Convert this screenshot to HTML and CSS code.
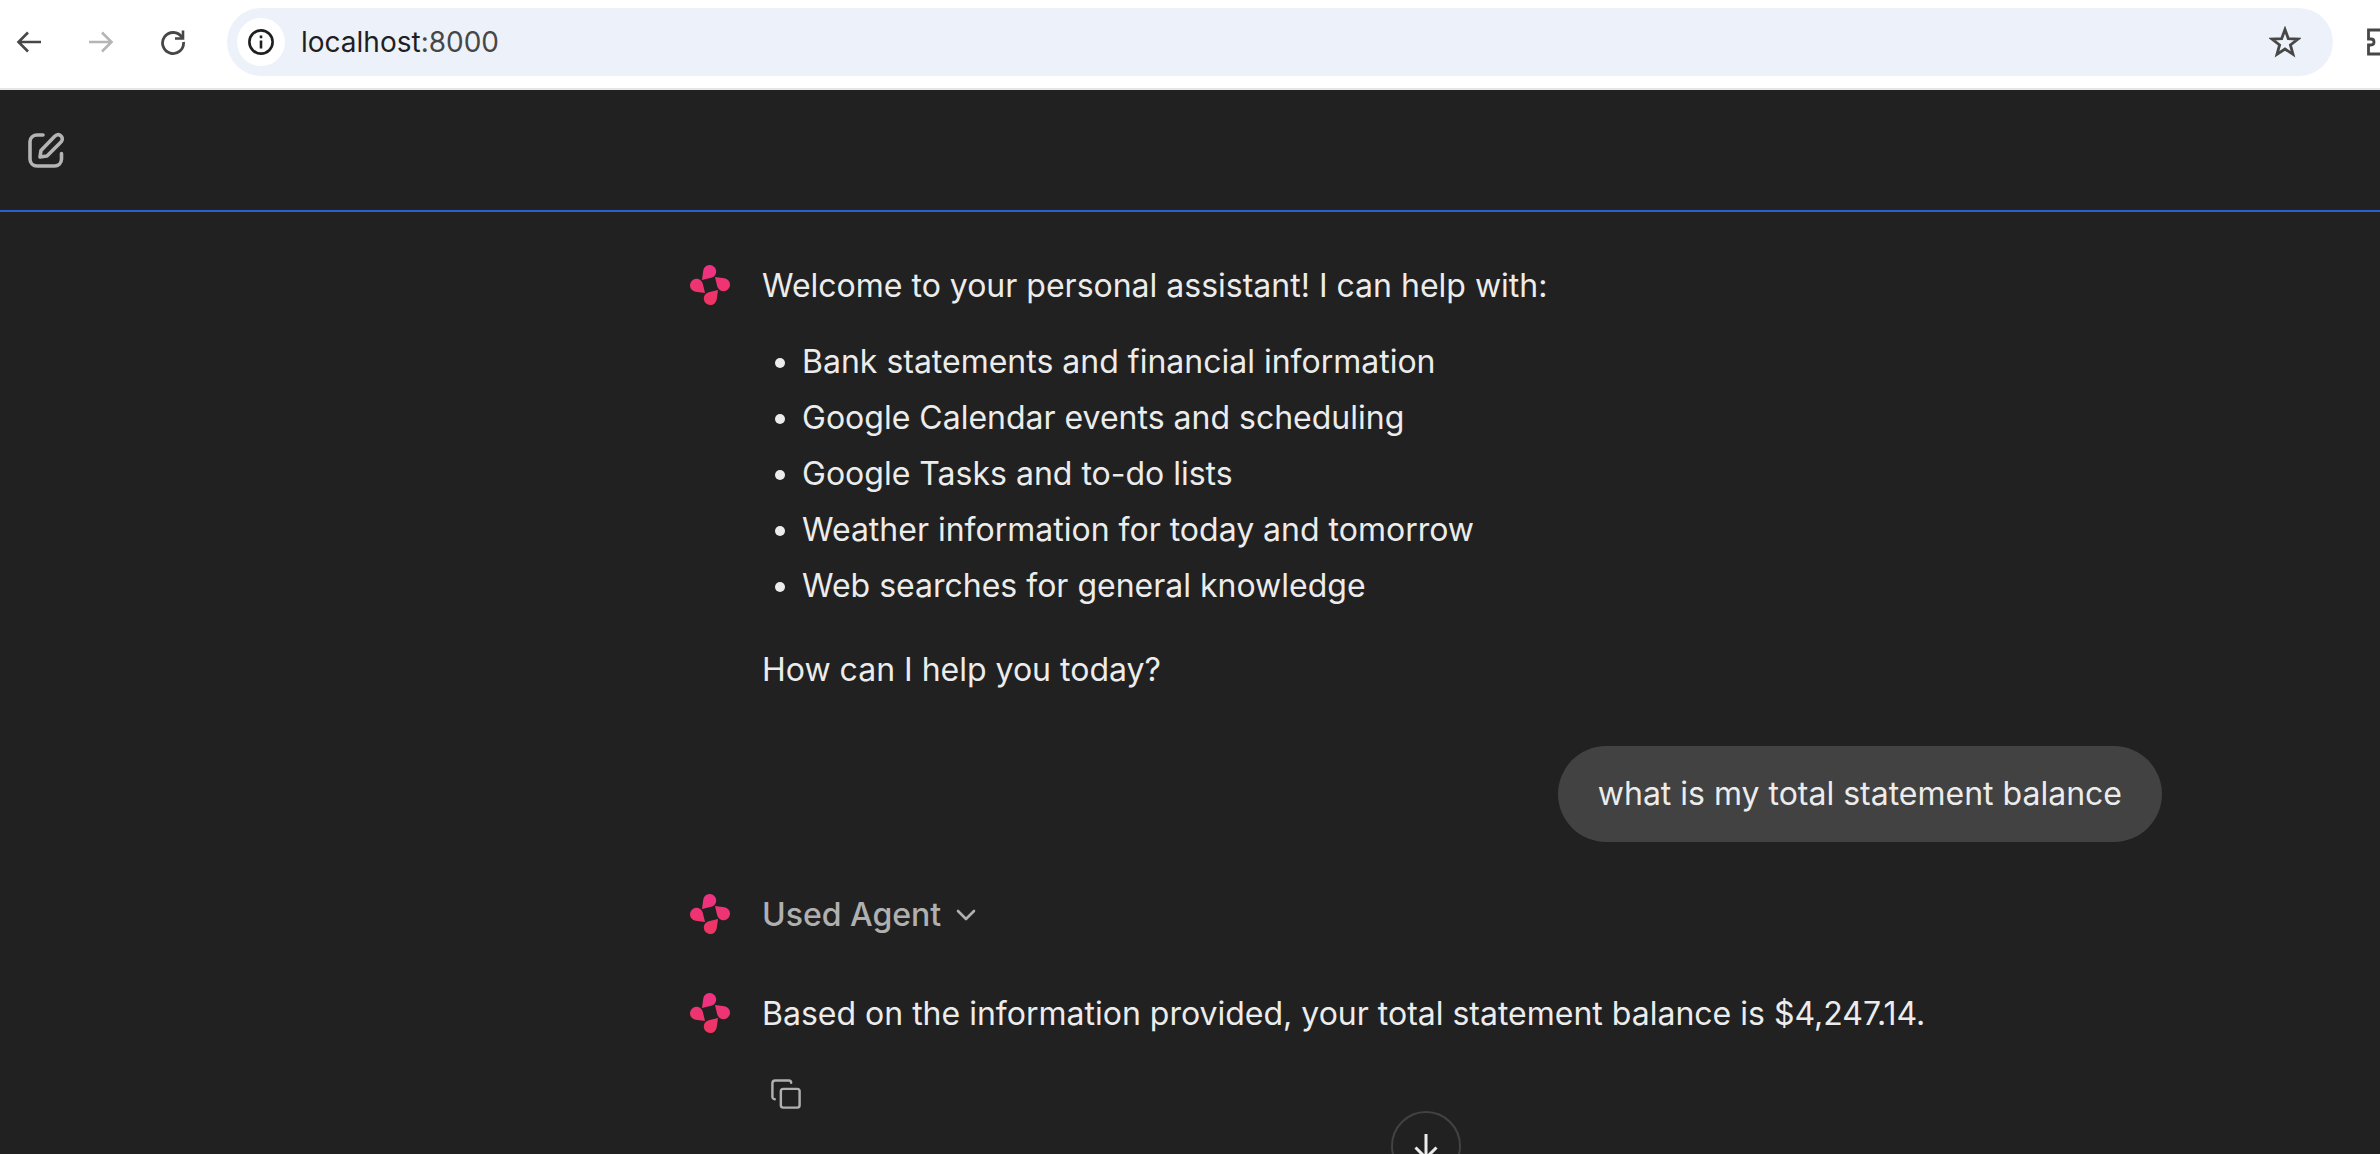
FILE: index.html
```html
<!DOCTYPE html>
<html lang="en">

<head>
    <meta charset="UTF-8">
    <title>localhost:8000</title>
    <link rel="stylesheet" href="styles.css">
</head>

<body>
    <svg class="defs" width="0" height="0">
        <defs>
            <linearGradient id="petal" gradientUnits="userSpaceOnUse" x1="20" y1="0" x2="20" y2="40">
                <stop offset="0" stop-color="#ee3286"></stop>
                <stop offset="1" stop-color="#ee3560"></stop>
            </linearGradient>
            <symbol id="logo" viewBox="0 0 40 40">
                <path fill="url(#petal)" d="M12 15 13.260 5.630A6.500 6.500 0 1 1 21.200 12.820Z"></path>
                <path fill="url(#petal)" d="M25 12 34.370 13.260A6.500 6.500 0 1 1 27.180 21.200Z"></path>
                <path fill="url(#petal)" d="M28 25 26.740 34.370A6.500 6.500 0 1 1 18.800 27.180Z"></path>
                <path fill="url(#petal)" d="M15 28 5.630 26.740A6.500 6.500 0 1 1 12.820 18.800Z"></path>
            </symbol>
        </defs>
    </svg>

    <div class="browser-bar">
        <button class="nav-btn">
            <svg width="28" height="28" viewBox="0 0 28 28" fill="none" stroke="#474747" stroke-width="2.600">
                <path d="M26 14H4M13 4.500 3.500 14l9.500 9.500"></path>
            </svg>
        </button>
        <button class="nav-btn">
            <svg width="28" height="28" viewBox="0 0 28 28" fill="none" stroke="#b5b5b5" stroke-width="2.600">
                <path d="M2 14h22M15 4.500l9.500 9.500-9.500 9.500"></path>
            </svg>
        </button>
        <button class="nav-btn">
            <svg width="28" height="28" viewBox="0 0 28 28" fill="none" stroke="#474747" stroke-width="2.800">
                <path d="M23 9.500A10.500 10.500 0 1 0 24.500 14"></path>
                <path d="M24 2.500V10.500H16" stroke-width="2.600"></path>
            </svg>
        </button>
        <div class="address">
            <span class="site-info">
                <svg width="28" height="28" viewBox="0 0 26 26" fill="none" stroke="#1f1f1f" stroke-width="2.400">
                    <circle cx="13" cy="13" r="10.800"></circle>
                    <path d="M13 11.500V19M13 7V9.500"></path>
                </svg>
            </span>
            <span class="url">localhost<span class="port">:8000</span></span>
            <svg class="star" width="32" height="32" viewBox="0 0 32 32" fill="none" stroke="#474747" stroke-width="2.800">
                <path d="M16 3.500 19.300 12.600 29 13 21.400 19 24 28.300 16 23 8 28.300 10.600 19 3 13 12.700 12.600Z"></path>
            </svg>
        </div>
        <svg class="puzzle" width="32" height="32" viewBox="0 0 32 32" fill="none" stroke="#474747" stroke-width="2.800">
            <path d="M22 4H1.500V13H4C8 13 8 19 4 19H1.500V28H22"></path>
        </svg>
    </div>

    <div class="app">
        <header class="chat-header">
            <button class="new-chat">
                <svg width="36" height="36" viewBox="0 0 36 36" fill="none" stroke="#b4b4b4" stroke-width="3.600" stroke-linecap="round" stroke-linejoin="round">
                    <path d="M15 3H9C5.500 3 2 5.500 2 9.500V27C2 31 5 34 9 34H26.500C30.500 34 33.500 31 33.500 27V21.500"></path>
                    <path d="M12 25 13 18.500 26.500 4.500C28.500 2.500 31 2 33 4C35 6 34.500 8.500 32.500 10.500L19 24Z"></path>
                </svg>
            </button>
        </header>

        <main class="thread">
            <div class="message">
                <svg class="avatar"><use href="#logo"></use></svg>
                <div class="body">
                    <p>Welcome to your personal assistant! I can help with:</p>
                    <ul class="topics">
                        <li>Bank statements and financial information</li>
                        <li>Google Calendar events and scheduling</li>
                        <li>Google Tasks and to-do lists</li>
                        <li>Weather information for today and tomorrow</li>
                        <li>Web searches for general knowledge</li>
                    </ul>
                    <p>How can I help you today?</p>
                </div>
            </div>

            <div class="user-row">
                <div class="bubble">what is my total statement balance</div>
            </div>

            <div class="message agent-row">
                <svg class="avatar"><use href="#logo"></use></svg>
                <div class="agent-toggle">
                    Used Agent
                    <svg width="22" height="14" viewBox="0 0 22 14" fill="none" stroke="#b0b0b0" stroke-width="2.600" stroke-linecap="round" stroke-linejoin="round">
                        <path d="M3 3l8 8 8-8"></path>
                    </svg>
                </div>
            </div>

            <div class="message answer-row">
                <svg class="avatar"><use href="#logo"></use></svg>
                <div class="body">
                    <p>Based on the information provided, your total statement balance is $4,247.14.</p>
                    <button class="copy-btn">
                        <svg width="30" height="30" viewBox="0 0 32 32" fill="none" stroke="#b0b0b0" stroke-width="2.600" stroke-linecap="round" stroke-linejoin="round">
                            <rect x="10.500" y="10.500" width="20" height="20" rx="2.500"></rect>
                            <path d="M4 21.500C2.500 21.500 1.500 20.500 1.500 19V4.500C1.500 2.800 2.800 1.500 4.500 1.500H19C20.500 1.500 21.500 2.500 21.500 4"></path>
                        </svg>
                    </button>
                </div>
            </div>
        </main>

        <button class="scroll-down">
            <svg width="28" height="28" viewBox="0 0 28 28" fill="none" stroke="#ececec" stroke-width="3">
                <path d="M14 2V26M3.500 15.500 14 26 24.500 15.500"></path>
            </svg>
        </button>
    </div>
</body>

</html>
```

FILE: styles.css
```css
html,
body {
    height: 100%;
}

body {
    margin: 0;
    overflow: hidden;
    background-color: #212121;
    font-family: Inter, "Liberation Sans", sans-serif;
    color: #ececec;
}

.defs {
    display: block;
    height: 0;
}

button {
    background: none;
    border: 0;
    padding: 0;
    display: block;
    line-height: 0;
}

/* browser chrome */
.browser-bar {
    height: 84px;
    padding-bottom: 4px;
    background-color: #fff;
    border-bottom: 2px solid #e6e6e6;
    display: flex;
    align-items: center;
    padding-left: 15px;
}

.nav-btn {
    width: 28px;
    margin-right: 44px;
}

.address {
    flex: none;
    width: 2106px;
    height: 68px;
    margin-left: -4px;
    margin-right: 34px;
    box-sizing: border-box;
    background-color: #edf2fa;
    border-radius: 34px;
    display: flex;
    align-items: center;
    padding-left: 10px;
    padding-right: 32px;
}

.site-info {
    width: 48px;
    height: 48px;
    border-radius: 50%;
    background-color: #fff;
    display: flex;
    align-items: center;
    justify-content: center;
}

.url {
    margin-left: 16px;
    font-size: 28px;
    color: #1f1f1f;
    flex: 1;
}

.port {
    color: #474747;
}

.star,
.puzzle {
    flex: none;
}

/* app */
.app {
    height: 1064px;
    position: relative;
}

.chat-header {
    height: 122px;
    box-sizing: border-box;
    border-bottom: 2px solid #2a5fd0;
    padding: 42px 0 0 28px;
}

.thread {
    width: 1472px;
    margin-left: 690px;
    padding-top: 46px;
    font-size: 32px;
    line-height: 56px;
}

.message {
    display: flex;
    gap: 32px;
}

.avatar {
    flex: none;
    width: 40px;
    height: 40px;
    margin-top: 7px;
}

.body p {
    margin: 0;
}

.topics {
    margin: 20px 0 28px;
    padding-left: 40px;
}

.user-row {
    display: flex;
    justify-content: flex-end;
    margin-top: 48px;
}

.bubble {
    background-color: #424242;
    border-radius: 48px;
    padding: 20px 40px;
}

.agent-row {
    margin-top: 45px;
}

.agent-toggle {
    color: #b0b0b0;
    font-weight: 500;
    display: flex;
    align-items: center;
    gap: 14px;
}

.answer-row {
    margin-top: 43px;
}

.copy-btn {
    margin: 37px 0 0 9px;
}

.scroll-down {
    position: absolute;
    left: 1391px;
    top: 1021px;
    width: 70px;
    height: 70px;
    box-sizing: border-box;
    border: 2px solid #424242;
    border-radius: 50%;
    display: flex;
    align-items: center;
    justify-content: center;
}
```
